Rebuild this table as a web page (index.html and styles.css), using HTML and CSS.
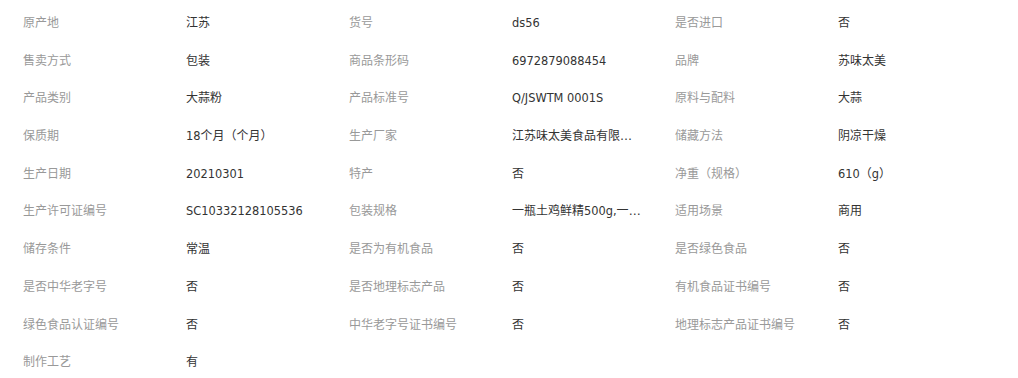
FILE: index.html
```html
<!DOCTYPE html>
<html lang="zh-CN">
<head>
<meta charset="utf-8">
<link rel="stylesheet" href="styles.css">
</head>
<body>
<div class="attrs">
  <div class="k">原产地</div><div class="v">江苏</div>
  <div class="k">货号</div><div class="v"><span class="n">ds56</span></div>
  <div class="k">是否进口</div><div class="v">否</div>
  <div class="k">售卖方式</div><div class="v">包装</div>
  <div class="k">商品条形码</div><div class="v"><span class="n">6972879088454</span></div>
  <div class="k">品牌</div><div class="v">苏味太美</div>
  <div class="k">产品类别</div><div class="v">大蒜粉</div>
  <div class="k">产品标准号</div><div class="v"><span class="n">Q/JSWTM 0001S</span></div>
  <div class="k">原料与配料</div><div class="v">大蒜</div>
  <div class="k">保质期</div><div class="v"><span class="n">18</span>个月（个月）</div>
  <div class="k">生产厂家</div><div class="v">江苏味太美食品有限公司</div>
  <div class="k">储藏方法</div><div class="v">阴凉干燥</div>
  <div class="k">生产日期</div><div class="v"><span class="n">20210301</span></div>
  <div class="k">特产</div><div class="v">否</div>
  <div class="k">净重（规格）</div><div class="v"><span class="n">610</span>（<span class="n">g</span>）</div>
  <div class="k">生产许可证编号</div><div class="v"><span class="n">SC10332128105536</span></div>
  <div class="k">包装规格</div><div class="v">一瓶土鸡鲜精<span class="n">500g,</span>一瓶大蒜粉</div>
  <div class="k">适用场景</div><div class="v">商用</div>
  <div class="k">储存条件</div><div class="v">常温</div>
  <div class="k">是否为有机食品</div><div class="v">否</div>
  <div class="k">是否绿色食品</div><div class="v">否</div>
  <div class="k">是否中华老字号</div><div class="v">否</div>
  <div class="k">是否地理标志产品</div><div class="v">否</div>
  <div class="k">有机食品证书编号</div><div class="v">否</div>
  <div class="k">绿色食品认证编号</div><div class="v">否</div>
  <div class="k">中华老字号证书编号</div><div class="v">否</div>
  <div class="k">地理标志产品证书编号</div><div class="v">否</div>
  <div class="k">制作工艺</div><div class="v">有</div>
</div>
</body>
</html>
```
FILE: styles.css
```css
html, body {
  margin: 0;
  padding: 0;
  background: #fff;
}
body {
  font-family: "DejaVu Sans", "Noto Sans CJK SC", sans-serif;
  font-size: 12px;
}
.attrs {
  display: grid;
  grid-template-columns: repeat(6, 163px);
  grid-auto-rows: 37.7px;
  padding: 4px 0 0 23px;
}
.k, .v {
  padding-top: 9px;
  line-height: 20px;
  white-space: nowrap;
  overflow: hidden;
}
.k {
  color: #999;
}
.v {
  color: #333;
  max-width: 130px;
  text-overflow: ellipsis;
}
.n {
  font-size: 11.4px;
}
```
